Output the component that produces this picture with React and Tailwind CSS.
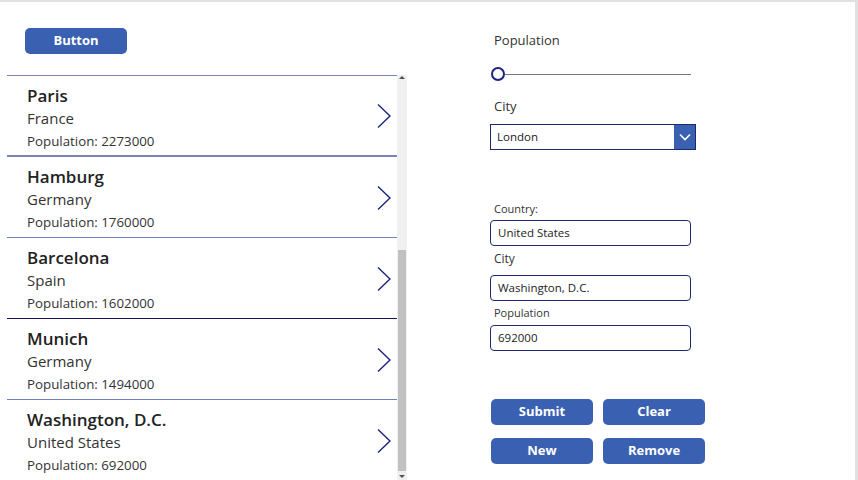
import { useState } from "react";

const cities = [
    { name: "Paris", country: "France", population: 2273000, line: "border-[#7b86b5]" },
    { name: "Hamburg", country: "Germany", population: 1760000, line: "border-[#7080bd]" },
    { name: "Barcelona", country: "Spain", population: 1602000, line: "border-[#0f1857]" },
    { name: "Munich", country: "Germany", population: 1494000, line: "border-[#7080bd]" },
    { name: "Washington, D.C.", country: "United States", population: 692000, line: "border-[#7080bd]" },
];

function Chevron() {
    return (
        <svg width="16" height="26" viewBox="0 0 16 26" className="mt-[2px] shrink-0 self-center">
            <path d="M2 1.5 L14 13 L2 24.5" fill="none" stroke="#1a237e" strokeWidth="1.4" />
        </svg>
    );
}

function BlueButton({ label, className = "" }) {
    return (
        <button
            type="button"
            className={"h-[26px] w-[102px] rounded-[5px] bg-[#3a60b2] text-[13px] font-bold text-white " + className}>
            {label}
        </button>
    );
}

function Field({ label, value, labelClass = "", gap = "mt-[3px]" }) {
    return (
        <div>
            <div className={"pl-1 text-[11px] leading-[16px] text-[#333] " + labelClass}>{label}</div>
            <div className={"flex h-[26px] w-[201px] items-center rounded-[4px] border border-[#1f2a6e] px-[7px] text-[11.5px] text-[#222] " + gap}>
                {value}
            </div>
        </div>
    );
}

export default function App() {
    const [selected] = useState(4);

    return (
        <div
            className="flex h-[480px] w-[858px] overflow-hidden border-t-2 border-r-[3px] border-[#e1e1e1] bg-white text-[#222]"
            style={{ fontFamily: '"Open Sans", "Noto Sans", sans-serif' }}>

            <div className="flex w-[407px] shrink-0 flex-col pl-[7px]">
                <div className="pl-[18px] pt-[25px]">
                    <BlueButton label="Button" className="w-[101px] h-[25px]" />
                </div>

                <div className="mt-[21px] flex min-h-0 flex-1">
                    <div className="flex-1 overflow-hidden border-t border-[#8088b0]">
                        {cities.map((c, i) => (
                            <div key={c.name} className={"flex h-[81px] items-start border-b pr-[5px] " + c.line + (i === 0 ? " border-b-2" : "")}>
                                <div className="flex-1 pl-[20px] pt-[9px]">
                                    <div className="text-[17px] leading-[22px] font-semibold text-[#222]">{c.name}</div>
                                    <div className="text-[15px] leading-[23px] text-[#333]">{c.country}</div>
                                    <div className="text-[13.3px] leading-[22px] text-[#333]">Population: {c.population}</div>
                                </div>
                                <Chevron />
                            </div>
                        ))}
                    </div>

                    <div className="flex w-[10px] flex-col items-center bg-[#f0f0f0]">
                        <div className="mt-[1px] h-0 w-0 border-x-[3px] border-b-[3px] border-x-transparent border-b-[#505050]" />
                        <div className="mt-[171px] h-[221px] w-[8px] bg-[#c1c1c1]" />
                        <div className="mt-[4px] h-0 w-0 border-x-[3px] border-t-[3px] border-x-transparent border-t-[#505050]" />
                    </div>
                </div>
            </div>

            <div className="ml-[83px] flex w-[220px] flex-col">
                <div className="mt-[28px] pl-1 text-[13px] leading-[20px] text-[#333]">Population</div>

                <div className="mt-[17px] flex h-[14px] items-center pl-[1px]">
                    <div className="h-[14px] w-[14px] shrink-0 rounded-full border-2 border-[#1a237e] bg-white" />
                    <div className="h-[1px] w-[186px] bg-[#7a7a7a]" />
                </div>

                <div className="mt-[15px] pl-1 text-[13px] leading-[20px] text-[#333]">City</div>

                <div className="mt-[8px] flex h-[26px] w-[206px] border border-[#1b2a6b]">
                    <div className="flex flex-1 items-center pl-[6px] text-[11.5px] text-[#222]">London</div>
                    <div className="flex w-[21px] items-center justify-center bg-[#3a60b2]">
                        <svg width="12" height="8" viewBox="0 0 12 8">
                            <path d="M1 1.5 L6 6.5 L11 1.5" fill="none" stroke="white" strokeWidth="1.6" />
                        </svg>
                    </div>
                </div>

                <div className="mt-[51px]">
                    <Field label="Country:" value="United States" />
                </div>
                <div className="mt-[5px]">
                    <Field label="City" value="Washington, D.C." labelClass="text-[12px]" gap="mt-[8px]" />
                </div>
                <div className="mt-[4px]">
                    <Field label="Population" value={String(selected === 4 ? 692000 : 0)} gap="mt-[4px]" />
                </div>

                <div className="mt-[48px] grid w-[215px] grid-cols-2 gap-x-[10px] gap-y-[13px] pl-[1px]">
                    <BlueButton label="Submit" />
                    <BlueButton label="Clear" />
                    <BlueButton label="New" />
                    <BlueButton label="Remove" />
                </div>
            </div>
        </div>
    );
}
